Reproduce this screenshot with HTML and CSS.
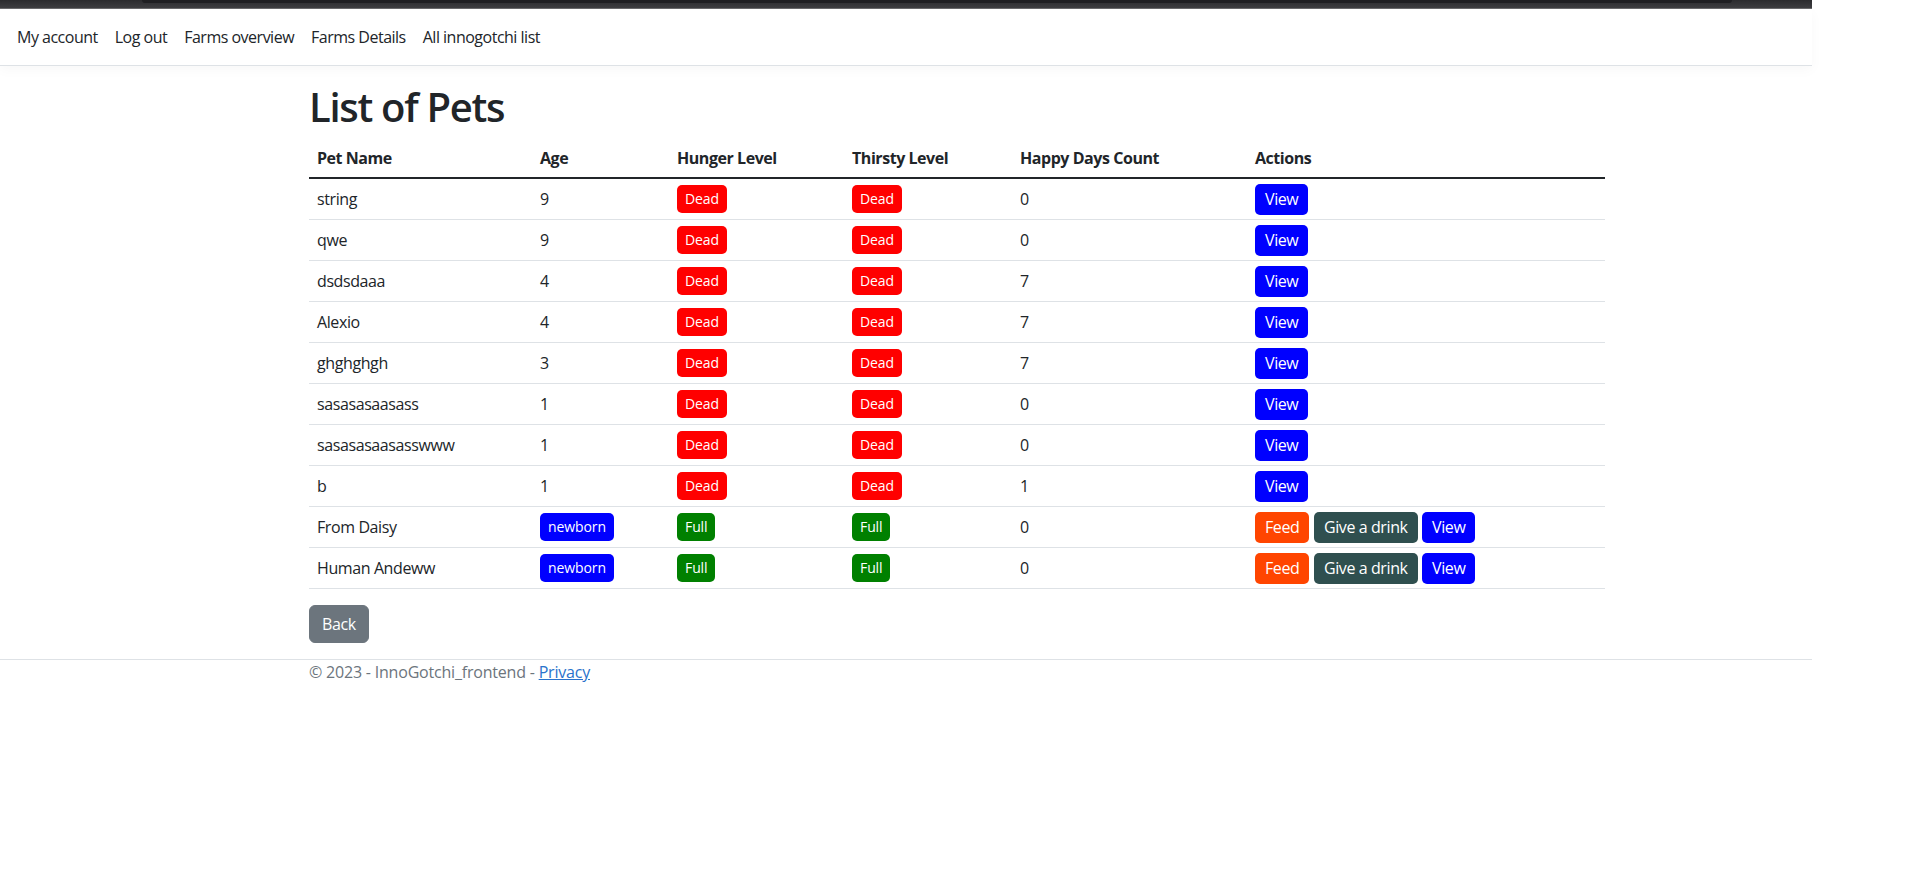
FILE: index.html
```html
<!DOCTYPE html>
<html lang="en">
<head>
<meta charset="utf-8">
<title>List of Pets - InnoGotchi_frontend</title>
<link rel="stylesheet" href="styles.css">
</head>
<body>
<div class="page">
  <div class="chrome"><div class="chrome-tab"></div></div>
  <header class="navbar">
    <ul class="nav">
      <li><a class="nav-link" href="#">My account</a></li>
      <li><a class="nav-link" href="#">Log out</a></li>
      <li><a class="nav-link" href="#">Farms overview</a></li>
      <li><a class="nav-link" href="#">Farms Details</a></li>
      <li><a class="nav-link" href="#">All innogotchi list</a></li>
    </ul>
  </header>
  <main class="container">
    <h1>List of Pets</h1>
    <table class="pets">
      <colgroup>
        <col class="c-name"><col class="c-age"><col class="c-hunger"><col class="c-thirst"><col class="c-happy"><col class="c-actions">
      </colgroup>
      <thead>
        <tr><th>Pet Name</th><th>Age</th><th>Hunger Level</th><th>Thirsty Level</th><th>Happy Days Count</th><th>Actions</th></tr>
      </thead>
      <tbody>
        <tr><td>string</td><td>9</td><td><span class="tag red">Dead</span></td><td><span class="tag red">Dead</span></td><td>0</td><td><div class="actions"><a class="act blue" href="#">View</a></div></td></tr>
        <tr><td>qwe</td><td>9</td><td><span class="tag red">Dead</span></td><td><span class="tag red">Dead</span></td><td>0</td><td><div class="actions"><a class="act blue" href="#">View</a></div></td></tr>
        <tr><td>dsdsdaaa</td><td>4</td><td><span class="tag red">Dead</span></td><td><span class="tag red">Dead</span></td><td>7</td><td><div class="actions"><a class="act blue" href="#">View</a></div></td></tr>
        <tr><td>Alexio</td><td>4</td><td><span class="tag red">Dead</span></td><td><span class="tag red">Dead</span></td><td>7</td><td><div class="actions"><a class="act blue" href="#">View</a></div></td></tr>
        <tr><td>ghghghgh</td><td>3</td><td><span class="tag red">Dead</span></td><td><span class="tag red">Dead</span></td><td>7</td><td><div class="actions"><a class="act blue" href="#">View</a></div></td></tr>
        <tr><td>sasasasaasass</td><td>1</td><td><span class="tag red">Dead</span></td><td><span class="tag red">Dead</span></td><td>0</td><td><div class="actions"><a class="act blue" href="#">View</a></div></td></tr>
        <tr><td>sasasasaasasswww</td><td>1</td><td><span class="tag red">Dead</span></td><td><span class="tag red">Dead</span></td><td>0</td><td><div class="actions"><a class="act blue" href="#">View</a></div></td></tr>
        <tr><td>b</td><td>1</td><td><span class="tag red">Dead</span></td><td><span class="tag red">Dead</span></td><td>1</td><td><div class="actions"><a class="act blue" href="#">View</a></div></td></tr>
        <tr><td>From Daisy</td><td><span class="tag blue">newborn</span></td><td><span class="tag green">Full</span></td><td><span class="tag green">Full</span></td><td>0</td><td><div class="actions"><a class="act orange" href="#">Feed</a><a class="act slate" href="#">Give a drink</a><a class="act blue" href="#">View</a></div></td></tr>
        <tr><td>Human Andeww</td><td><span class="tag blue">newborn</span></td><td><span class="tag green">Full</span></td><td><span class="tag green">Full</span></td><td>0</td><td><div class="actions"><a class="act orange" href="#">Feed</a><a class="act slate" href="#">Give a drink</a><a class="act blue" href="#">View</a></div></td></tr>
      </tbody>
    </table>
    <div class="back-row"><a class="btn-back" href="#">Back</a></div>
  </main>
  <footer class="footer">
    <div class="footer-inner">&copy; 2023 - InnoGotchi_frontend - <a href="#">Privacy</a></div>
  </footer>
</div>
</body>
</html>
```

FILE: styles.css
```css
html, body {
  margin: 0;
  padding: 0;
  background: #fff;
}

body {
  font-family: "Open Sans", "Noto Sans", "Liberation Sans", sans-serif;
  font-size: 16px;
  line-height: 1.5;
  letter-spacing: -0.4px;
  color: #212529;
}

.page {
  width: 1812px;
}

/* browser chrome strip at the very top */
.chrome {
  height: 8px;
  background: linear-gradient(#2b2b2e, #3e3e41);
  border-bottom: 1px solid #6a6a6c;
}

.chrome-tab {
  margin-left: 142px;
  width: 1590px;
  height: 3px;
  background: #1f1f22;
  border-radius: 0 0 6px 6px;
}

/* navigation */
.navbar {
  height: 56px;
  display: flex;
  align-items: center;
  padding-left: 9px;
  border-bottom: 1px solid #dee2e6;
  box-shadow: 0 4px 12px rgba(0, 0, 0, 0.03);
}

.nav {
  list-style: none;
  margin: 0;
  padding: 0;
  display: flex;
  gap: 1px;
}

.nav-link {
  display: block;
  padding: 0 8px;
  color: #212529;
  letter-spacing: -0.5px;
  text-decoration: none;
}

/* main */
.container {
  margin-left: 309px;
  width: 1296px;
  padding-top: 17px;
  padding-bottom: 16px;
}

h1 {
  margin: 0 0 8px;
  font-size: 40px;
  font-weight: 600;
  letter-spacing: -1.3px;
  line-height: 48px;
}

.pets {
  width: 1296px;
  table-layout: fixed;
  border-collapse: separate;
  border-spacing: 0;
  margin-bottom: 16px;
}

.c-name { width: 223px; }
.c-age { width: 137px; }
.c-hunger { width: 175px; }
.c-thirst { width: 168px; }
.c-happy { width: 235px; }
.c-actions { width: 358px; }

.pets th {
  height: 38px;
  padding: 0 8px;
  text-align: left;
  vertical-align: middle;
  font-weight: 700;
  letter-spacing: -0.45px;
  border-bottom: 2px solid #212529;
}

.pets td {
  height: 40px;
  padding: 0 8px;
  vertical-align: middle;
  border-bottom: 1px solid #dee2e6;
}

.tag {
  display: inline-block;
  height: 28px;
  line-height: 28px;
  padding: 0 8px;
  font-size: 14px;
  letter-spacing: -0.1px;
  color: #fff;
  border-radius: 5px;
  vertical-align: middle;
}

.actions {
  display: flex;
  gap: 4.5px;
}

.act {
  display: block;
  height: 31px;
  line-height: 31px;
  padding: 0 10px;
  font-size: 16px;
  color: #fff;
  text-decoration: none;
  border-radius: 5px;
}

.red { background: #ff0000; }
.green { background: #008000; }
.blue { background: #0000ff; }
.orange { background: #ff4500; }
.slate { background: #2f4f4f; }

.back-row {
  display: flex;
}

.btn-back {
  display: block;
  padding: 6px 12px;
  line-height: 24px;
  color: #fff;
  background: #6c757d;
  border: 1px solid #6c757d;
  border-radius: 6px;
  text-decoration: none;
}

/* footer */
.footer {
  border-top: 1px solid #dee2e6;
}

.footer-inner {
  margin-left: 309px;
  line-height: 24px;
  letter-spacing: -0.2px;
  color: #6c757d;
}

.footer-inner a {
  color: #2a73cc;
  text-decoration: underline;
}
```
